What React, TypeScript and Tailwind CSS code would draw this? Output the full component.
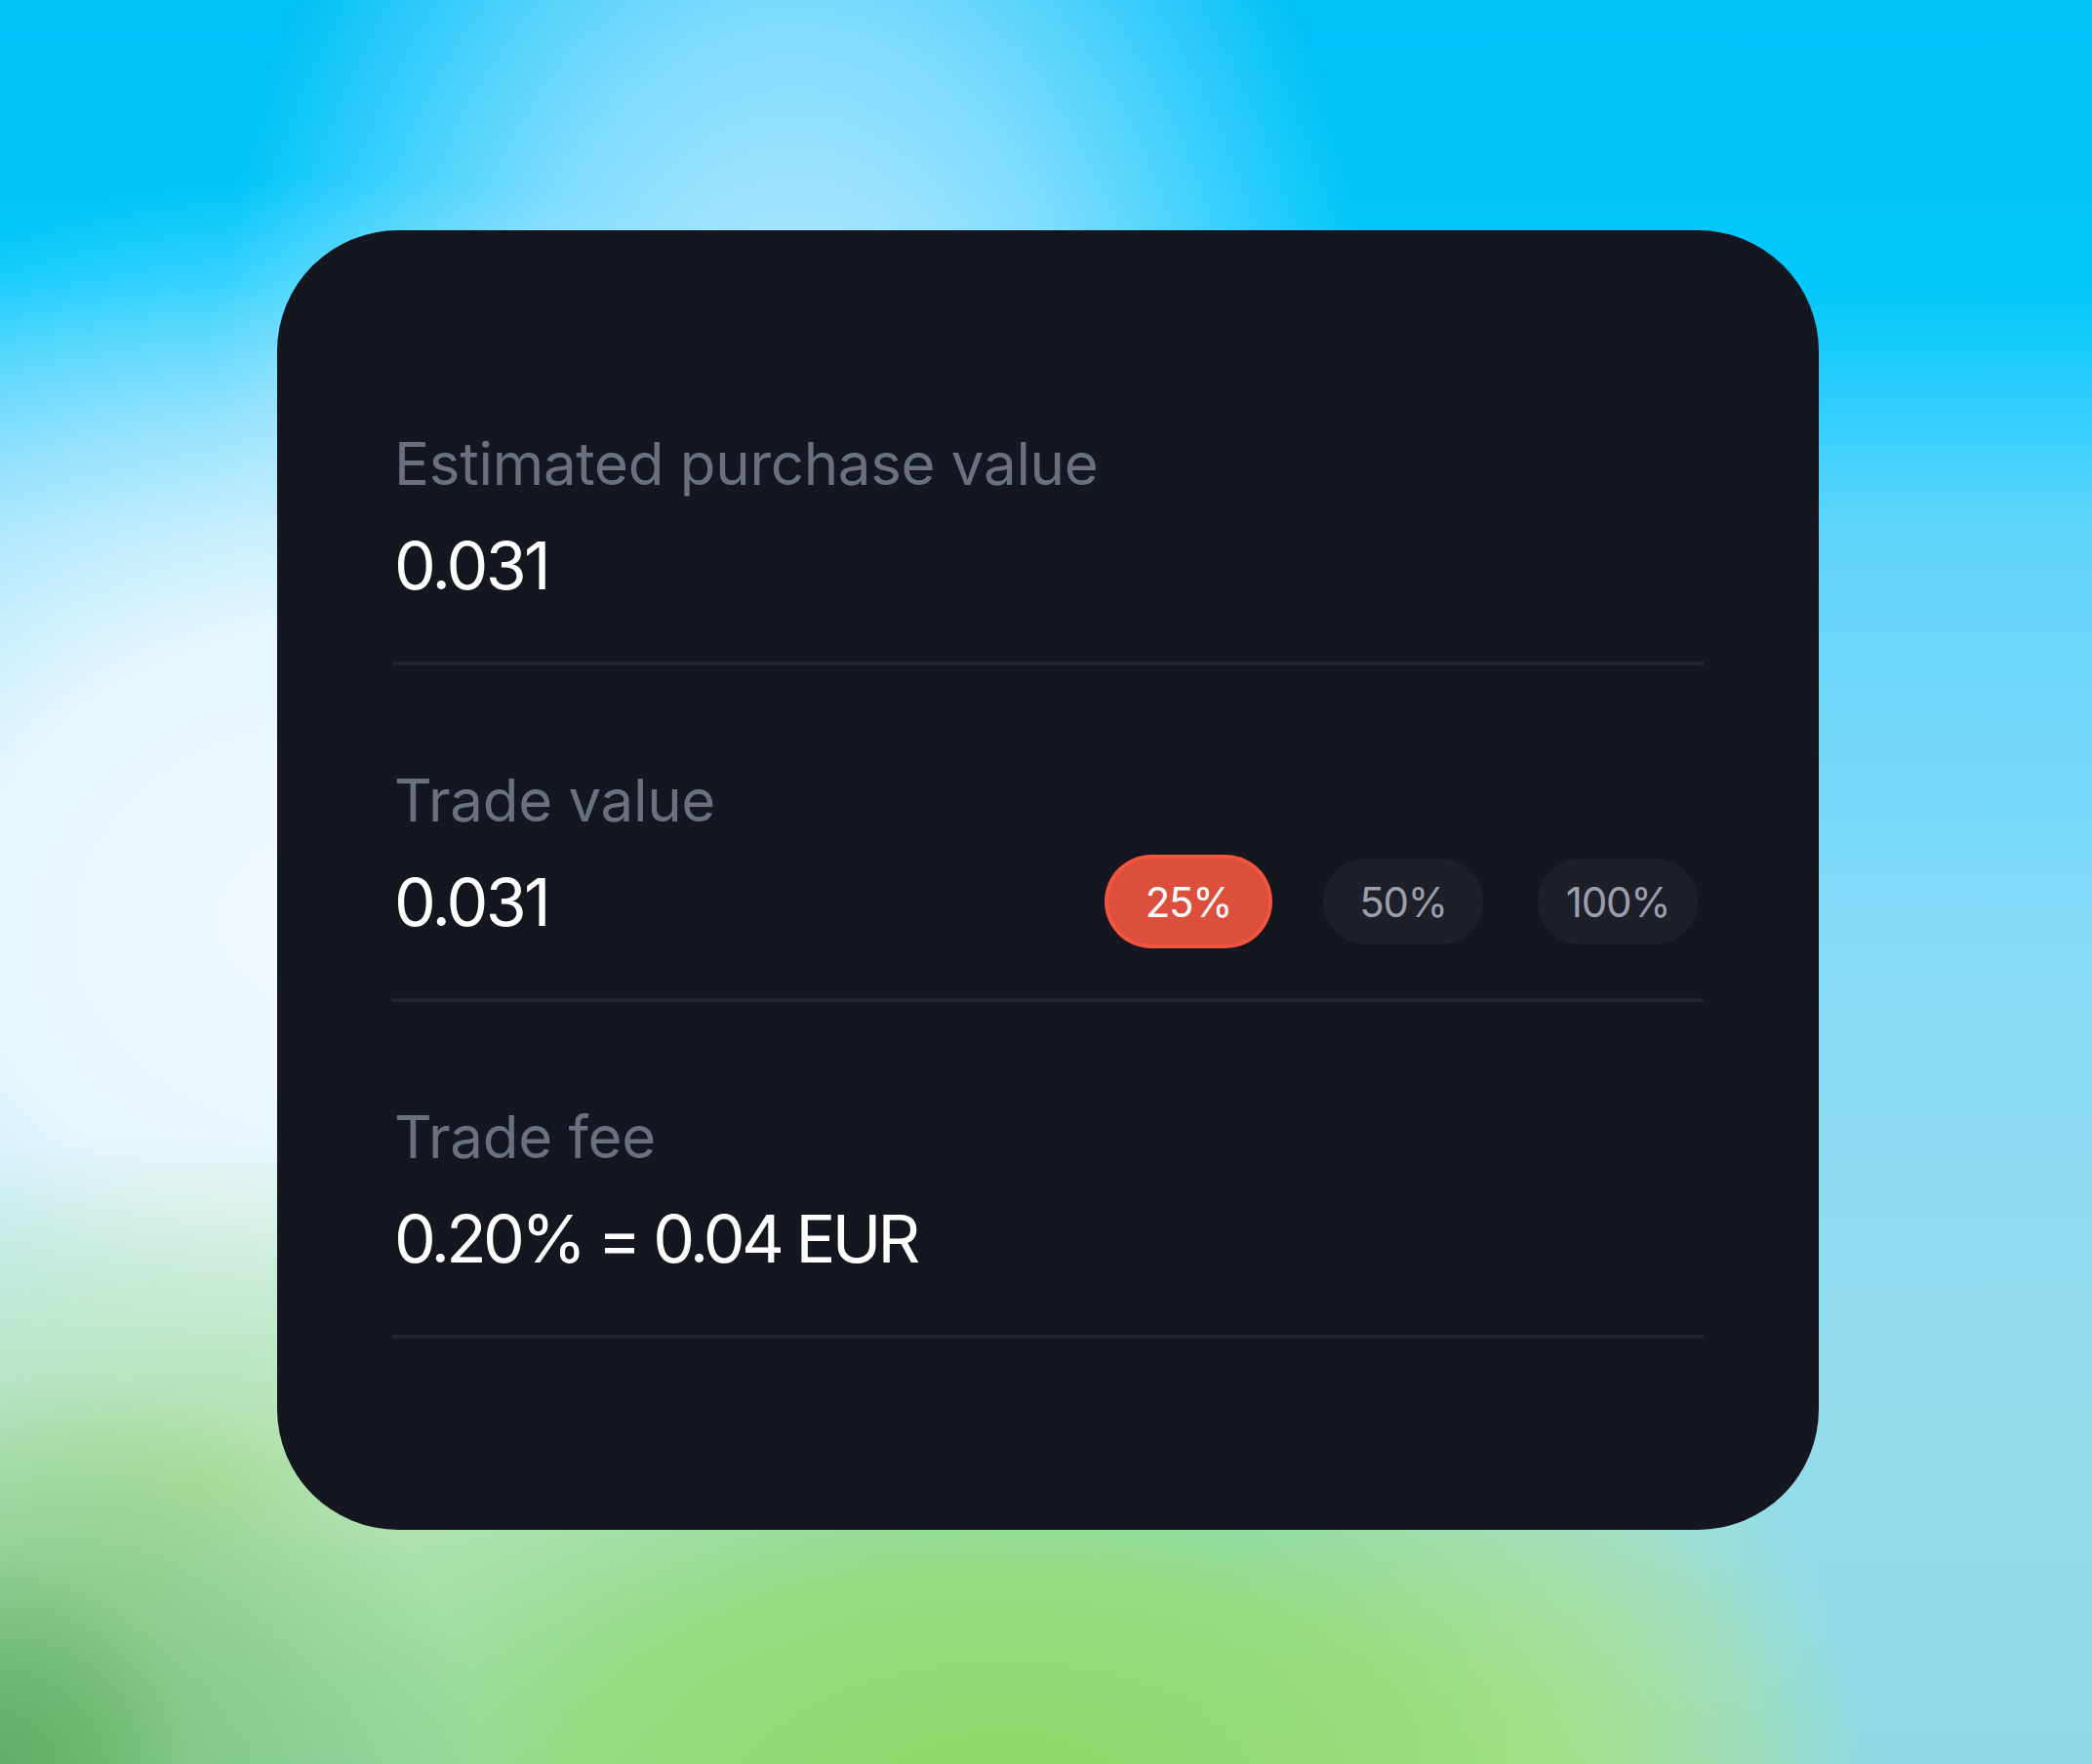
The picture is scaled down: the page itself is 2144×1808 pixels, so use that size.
import React from "react";

const font = { fontFamily: "Inter, 'Noto Sans', sans-serif" };

function Section({ label, children }: { label: string; children: React.ReactNode }) {
  return (
    <div className="pt-[102px] pb-[59px] border-b-4 border-[#22242f]">
      <div className="text-[60px] leading-[72px] text-[#6a717e] tracking-[-0.005em] pl-[2px]">{label}</div>
      <div className="mt-[28px] h-[80px] flex items-center">{children}</div>
    </div>
  );
}

export default function App() {
  return (
    <div
      className="w-full h-[1808px] pt-[236px] pl-[284px] [background-image:radial-gradient(ellipse_9%_12%_at_0%_100%,#62ad68_0%,rgba(98,173,104,0.5)_50%,transparent_100%),radial-gradient(ellipse_20%_22%_at_3%_100%,#7cc274_0%,rgba(124,194,116,0.6)_50%,transparent_100%),radial-gradient(ellipse_42%_26%_at_48%_102%,#8ed863_0%,rgba(150,220,115,0.85)_50%,transparent_100%),radial-gradient(ellipse_16%_24%_at_73%_100%,#c0e6ae_0%,transparent_100%),radial-gradient(ellipse_34%_20%_at_10%_84%,rgba(178,226,160,0.95)_0%,rgba(190,230,180,0.6)_50%,transparent_100%),radial-gradient(ellipse_44%_42%_at_16%_52%,#f2faff_0%,rgba(234,247,255,0.95)_40%,rgba(205,238,255,0.55)_72%,transparent_100%),radial-gradient(ellipse_28%_50%_at_38%_26%,rgba(200,238,255,1)_0%,rgba(170,228,255,0.75)_50%,transparent_100%),linear-gradient(180deg,#00c0f8_0%,#00c8fc_16%,#5fd4fb_30%,#88dbf7_55%,#94dcec_80%,#8fd9e6_100%)]"
      style={font}
    >
      <div className="w-[1580px] h-[1332px] rounded-[124px] bg-[#14171f] pt-[101px] px-[118px]">
        <Section label="Estimated purchase value">
          <div className="text-[68px] leading-[80px] text-white tracking-[-0.04em] pl-[2px]">0.031</div>
        </Section>
        <Section label="Trade value">
          <div className="flex-1 flex items-center justify-between">
            <div className="text-[68px] leading-[80px] text-white tracking-[-0.04em] pl-[2px]">0.031</div>
            <div className="flex items-center gap-[56px] mr-[6px]">
              <button className="w-[164px] h-[88px] rounded-full bg-[#dc4f3c] ring-4 ring-[#f4553e] text-white text-[42px] tracking-[-0.03em]">25%</button>
              <button className="w-[164px] h-[88px] rounded-full bg-[#1e2029] text-[#9b9eab] text-[42px] tracking-[-0.03em]">50%</button>
              <button className="w-[164px] h-[88px] rounded-full bg-[#1e2029] text-[#9b9eab] text-[42px] tracking-[-0.03em]">100%</button>
            </div>
          </div>
        </Section>
        <Section label="Trade fee">
          <div className="text-[68px] leading-[80px] text-white tracking-[-0.055em] pl-[2px]">0.20% = 0.04 EUR</div>
        </Section>
      </div>
    </div>
  );
}
